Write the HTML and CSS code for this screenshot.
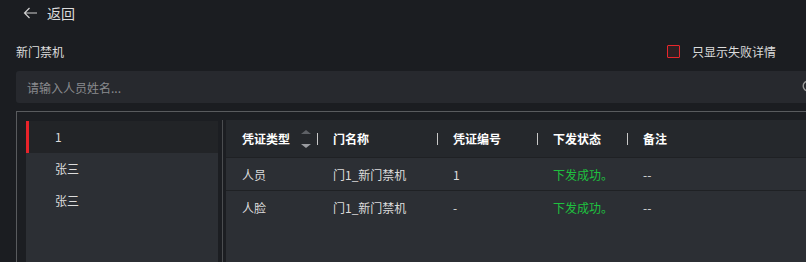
FILE: index.html
```html
<!DOCTYPE html>
<html lang="zh">
<head>
<meta charset="utf-8">
<link rel="stylesheet" href="styles.css">
</head>
<body>
<div class="page">
  <div class="topbar">
    <svg class="back-icon" width="15" height="12" viewBox="0 0 15 12"><path d="M14 6H1.5M6.5 1L1.5 6l5 5" fill="none" stroke="#cfcfcf" stroke-width="1.2"/></svg>
    <span class="back-text">返回</span>
  </div>
  <div class="title-row">
    <span class="title">新门禁机</span>
    <label class="check">
      <span class="check-box"></span>
      <span class="check-text">只显示失败详情</span>
    </label>
  </div>
  <div class="search">
    <span class="placeholder">请输入人员姓名...</span>
    <svg class="search-icon" width="14" height="14" viewBox="0 0 14 14"><circle cx="6" cy="6" r="4.8" fill="none" stroke="#9a9a9a" stroke-width="1.4"/><path d="M9.5 9.5L13 13" stroke="#9a9a9a" stroke-width="1.4"/></svg>
  </div>
  <div class="panel">
    <div class="list">
      <div class="item active">1</div>
      <div class="item">张三</div>
      <div class="item">张三</div>
    </div>
    <div class="divider"></div>
    <div class="table">
      <div class="thead">
        <div class="th first"><span>凭证类型</span>
          <span class="sort"><i class="up"></i><i class="down"></i></span>
        </div>
        <div class="th sep">门名称</div>
        <div class="th sep">凭证编号</div>
        <div class="th sep">下发状态</div>
        <div class="th sep">备注</div>
      </div>
      <div class="tr">
        <div class="td">人员</div>
        <div class="td">门1_新门禁机</div>
        <div class="td">1</div>
        <div class="td ok">下发成功。</div>
        <div class="td">--</div>
      </div>
      <div class="tr">
        <div class="td">人脸</div>
        <div class="td">门1_新门禁机</div>
        <div class="td">-</div>
        <div class="td ok">下发成功。</div>
        <div class="td">--</div>
      </div>
    </div>
  </div>
</div>
</body>
</html>
```

FILE: styles.css
```css
* { box-sizing: border-box; }
html, body { margin: 0; padding: 0; background: #1b1d21; }
body {
  font-family: "Noto Sans CJK SC", "Noto Sans", sans-serif;
  font-size: 12px;
  color: #dcdcdc;
  overflow: hidden;
}
.page { width: 806px; height: 262px; overflow: hidden; }

.topbar {
  height: 26px;
  display: flex;
  align-items: center;
  padding-left: 23px;
}
.back-icon { margin-right: 9px; }
.back-text { font-size: 14px; color: #dcdcdc; }

.title-row {
  margin-top: 12px;
  height: 26px;
  display: flex;
  align-items: center;
  justify-content: space-between;
  padding-left: 16px;
  padding-right: 30px;
}
.title { color: #dcdcdc; }
.check { display: flex; align-items: center; gap: 12px; }
.check-box {
  width: 13px; height: 13px;
  border: 1px solid #e8262b;
  background: #2d2023;
  border-radius: 1px;
}

.search {
  margin: 7px 0 0 16px;
  width: 830px;
  height: 32px;
  background: #27292e;
  border-radius: 3px;
  display: flex;
  align-items: center;
  padding-left: 11px;
  padding-right: 30px;
}
.placeholder { flex: 1; color: #8a8b8e; }

.panel {
  margin: 8px 0 0 16px;
  width: 830px;
  height: 200px;
  border: 1px solid #595b5e;
  padding: 9px;
  display: flex;
  background: #1c1e22;
}
.list {
  width: 192px;
  background: #2c2f34;
}
.item {
  height: 32px;
  line-height: 32px;
  padding-left: 29px;
  color: #dcdcdc;
}
.item.active {
  background: #222427;
  border-left: 3px solid #e8232a;
  padding-left: 26px;
}
.divider {
  width: 1px;
  margin: -1px 3px 0 4px;
  background: #4b4d50;
}
.table {
  flex: 1;
  background: #2c2f34;
  margin-top: -1px;
}
.thead, .tr {
  display: grid;
  grid-template-columns: 91px 120px 100px 90px 1fr;
}
.thead {
  height: 37px;
  background: #25282c;
}
.th {
  display: flex;
  align-items: center;
  padding-left: 16px;
  font-weight: bold;
  color: #ffffff;
}
.th.sep {
  background: linear-gradient(#c8c8c8, #c8c8c8) left center / 1px 12px no-repeat;
}
.sort {
  display: flex;
  flex-direction: column;
  margin-left: 11px;
  gap: 10px;
}
.sort i { display: block; width: 0; height: 0; border-left: 5px solid transparent; border-right: 5px solid transparent; }
.sort .up { border-bottom: 4px solid #5e6166; }
.sort .down { border-top: 4px solid #9a9ca0; }
.tr {
  height: 33px;
  border-top: 1px solid #1f2124;
}
.td {
  display: flex;
  align-items: center;
  padding-left: 16px;
  color: #dcdcdc;
}
.td.ok { color: #1ec13f; }
```
